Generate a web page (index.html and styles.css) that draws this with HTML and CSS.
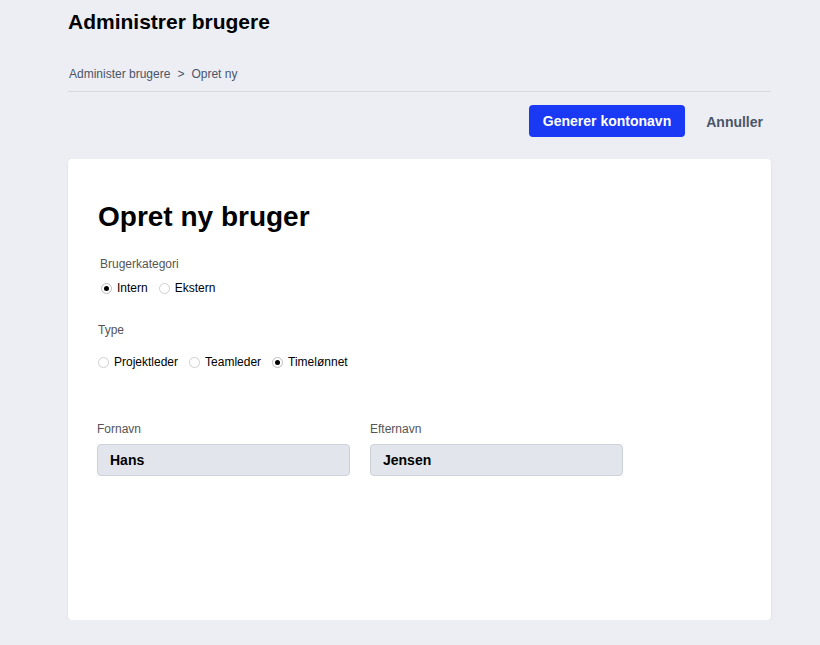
FILE: index.html
```html
<!DOCTYPE html>
<html lang="da">
<head>
<meta charset="utf-8">
<title>Administrer brugere</title>
<link rel="stylesheet" href="styles.css">
</head>
<body>
<div class="page">
  <h1 class="page-title">Administrer brugere</h1>
  <nav class="breadcrumb">
    <span>Administer brugere</span><span class="sep">&gt;</span><span>Opret ny</span>
  </nav>
  <div class="actions">
    <button class="btn-primary">Generer kontonavn</button>
    <button class="btn-link">Annuller</button>
  </div>
  <section class="card">
    <h2 class="card-title">Opret ny bruger</h2>
    <div class="group group-cat">
      <div class="label">Brugerkategori</div>
      <div class="radios">
        <label class="radio"><span class="dot checked"></span>Intern</label>
        <label class="radio"><span class="dot"></span>Ekstern</label>
      </div>
    </div>
    <div class="group group-type">
      <div class="label">Type</div>
      <div class="radios">
        <label class="radio"><span class="dot"></span>Projektleder</label>
        <label class="radio"><span class="dot"></span>Teamleder</label>
        <label class="radio"><span class="dot checked"></span>Timelønnet</label>
      </div>
    </div>
    <div class="fields">
      <div class="field">
        <div class="label">Fornavn</div>
        <div class="input">Hans</div>
      </div>
      <div class="field">
        <div class="label">Efternavn</div>
        <div class="input">Jensen</div>
      </div>
    </div>
  </section>
</div>
</body>
</html>
```

FILE: styles.css
```css
* { box-sizing: border-box; }
html, body {
  margin: 0;
  background: #edeef3;
  font-family: "Liberation Sans", Arial, sans-serif;
  color: #000;
}
.page {
  padding: 0 49px 0 68px;
}
.page-title {
  margin: 0;
  padding-top: 10px;
  font-size: 21px;
  line-height: 24px;
  font-weight: bold;
}
.breadcrumb {
  margin-top: 32px;
  padding: 0 0 9px 1px;
  border-bottom: 1px solid #d6d8de;
  font-size: 12px;
  line-height: 16px;
  color: #4a5568;
}
.breadcrumb .sep {
  margin: 0 7px;
}
.actions {
  display: flex;
  justify-content: flex-end;
  align-items: center;
  margin-top: 13px;
}
.btn-primary {
  height: 32px;
  padding: 0 14px;
  border: none;
  border-radius: 4px;
  background: #1a39f5;
  color: #fff;
  font-family: inherit;
  font-size: 14px;
  font-weight: bold;
}
.btn-link {
  height: 32px;
  padding: 1px 8px 0 21px;
  border: none;
  background: transparent;
  color: #4a5568;
  font-family: inherit;
  font-size: 14px;
  font-weight: bold;
}
.card {
  margin-top: 22px;
  height: 461px;
  background: #fff;
  border-radius: 4px;
  box-shadow: 0 1px 3px rgba(0, 0, 0, 0.08);
  padding: 41px 30px 0 30px;
}
.card-title {
  margin: 0;
  font-size: 28px;
  line-height: 34px;
  font-weight: bold;
}
.label {
  font-size: 12px;
  line-height: 16px;
  color: #555;
}
.group-cat {
  margin-top: 22px;
  padding-left: 2px;
}
.group-cat .radios {
  margin-top: 8px;
  padding-left: 1px;
}
.group-type {
  margin-top: 26px;
}
.group-type .radios {
  margin-top: 16px;
}
.radios {
  display: flex;
  gap: 11px;
}
.radio {
  display: flex;
  align-items: center;
  gap: 5px;
  font-size: 12px;
  line-height: 16px;
}
.dot {
  flex: 0 0 11px;
  width: 11px;
  height: 11px;
  border-radius: 50%;
  border: 1px solid #cfcfcf;
  background: #fff;
  position: relative;
}
.dot.checked {
  border-color: #bdbdbd;
}
.dot.checked::after {
  content: "";
  position: absolute;
  left: 2px;
  top: 2px;
  width: 5px;
  height: 5px;
  border-radius: 50%;
  background: #000;
}
.fields {
  display: flex;
  gap: 20px;
  margin-top: 51px;
  margin-left: -1px;
}
.field {
  width: 253px;
}
.field .label {
  margin-bottom: 7px;
}
.input {
  height: 32px;
  border: 1px solid #cdd1d8;
  border-radius: 4px;
  background: #e2e5ec;
  padding: 0 12px;
  font-size: 14px;
  font-weight: bold;
  line-height: 30px;
}
```
